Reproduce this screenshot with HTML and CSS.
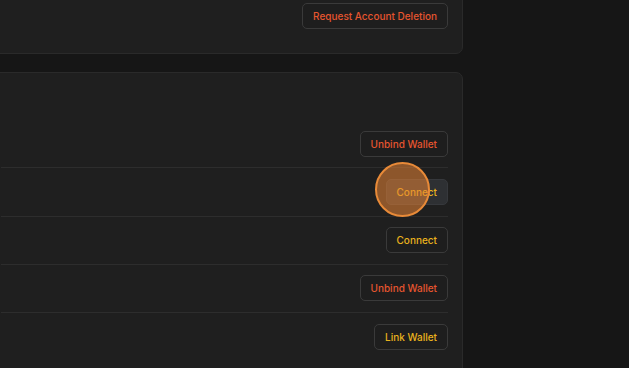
FILE: index.html
```html
<!DOCTYPE html>
<html lang="en">
<head>
    <meta charset="UTF-8">
    <title>Account Settings</title>
    <link rel="stylesheet" href="styles.css">
</head>
<body>
    <div class="page">
        <!-- Danger zone -->
        <section class="card card-top">
            <div class="row row-last">
                <button class="btn btn-danger">Request Account Deletion</button>
            </div>
        </section>

        <!-- Wallets -->
        <section class="card card-wallets">
            <div class="card-head"></div>
            <div class="row">
                <button class="btn btn-danger">Unbind Wallet</button>
            </div>
            <div class="row">
                <button class="btn btn-warn btn-hover">Connect</button>
                <span class="click-dot"></span>
            </div>
            <div class="row">
                <button class="btn btn-warn">Connect</button>
            </div>
            <div class="row">
                <button class="btn btn-danger">Unbind Wallet</button>
            </div>
            <div class="row row-last">
                <button class="btn btn-warn">Link Wallet</button>
            </div>
        </section>
    </div>
</body>
</html>
```

FILE: styles.css
```css
* {
    box-sizing: border-box;
}

html, body {
    height: 100%;
}

body {
    margin: 0;
    background: #161616;
    font-family: "Inter", "Noto Sans", sans-serif;
    overflow: hidden;
}

.page {
    width: 463px;
    display: flex;
    flex-direction: column;
    gap: 18px;
}

.card {
    background: #1f1f1f;
    border: 1px solid #2a2a2a;
    border-radius: 7px;
    margin-left: -20px;
    padding: 0 14px 0 20px;
}

.card-top {
    margin-top: -20px;
    padding-top: 22px;
    padding-bottom: 24px;
    border-top-left-radius: 0;
    border-top-right-radius: 0;
}

.card-wallets {
    flex-shrink: 0;
    padding-bottom: 60px;
}

.card-head {
    height: 47px;
}

.row {
    position: relative;
    display: flex;
    justify-content: flex-end;
    align-items: center;
    padding: 10.5px 0 10.83px;
    border-bottom: 1px solid #2d2d2d;
}

.card-top .row {
    padding: 0;
}

.row-last {
    border-bottom: none;
}

.btn {
    height: 26px;
    padding: 0 10px;
    background: #1e1e1e;
    border: 1px solid #3a3a3a;
    border-radius: 5px;
    font-family: inherit;
    font-size: 10px;
    font-weight: 500;
    cursor: pointer;
}

.btn-danger {
    color: #e5552f;
}

.btn-warn {
    color: #e9b21d;
}

.btn-hover {
    background: #2e3033;
    border-color: #36383c;
}

/* click indicator from the recording */
.click-dot {
    position: absolute;
    right: 18px;
    top: -6px;
    width: 55px;
    height: 55px;
    border-radius: 50%;
    background: rgba(232, 132, 52, 0.55);
    border: 2px solid #e88a38;
}
```
